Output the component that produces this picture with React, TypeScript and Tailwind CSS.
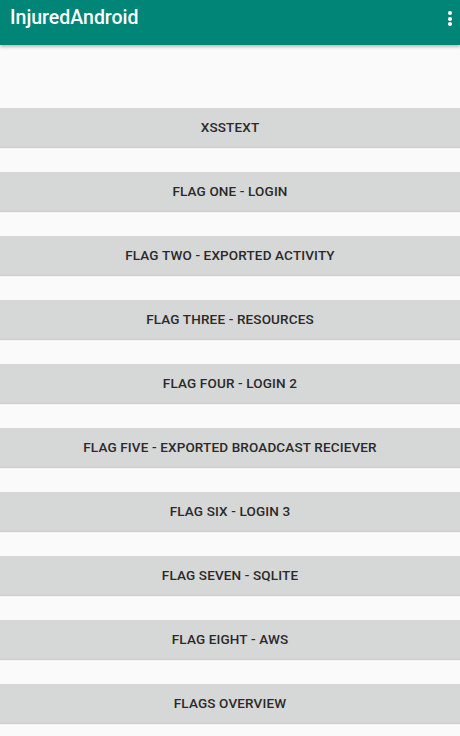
const items = [
  "XSSTEXT",
  "FLAG ONE - LOGIN",
  "FLAG TWO - EXPORTED ACTIVITY",
  "FLAG THREE - RESOURCES",
  "FLAG FOUR - LOGIN 2",
  "FLAG FIVE - EXPORTED BROADCAST RECIEVER",
  "FLAG SIX - LOGIN 3",
  "FLAG SEVEN - SQLITE",
  "FLAG EIGHT - AWS",
  "FLAGS OVERVIEW",
];

export default function App() {
  return (
    <main className="h-[736px] overflow-hidden bg-[#fafafa] font-['Roboto',sans-serif]">
      <header className="relative z-10 flex h-[45px] items-start justify-between bg-[#008577] pl-[10px] pr-[8px] pt-[6px] shadow-[0_2px_3px_rgba(0,0,0,0.25)]">
        <h1 className="text-[19.5px] font-medium leading-[24px] text-white">InjuredAndroid</h1>
        <div className="flex flex-col gap-[1.5px] pt-[5px]">
          <span className="h-[4px] w-[4px] rounded-full bg-white" />
          <span className="h-[4px] w-[4px] rounded-full bg-white" />
          <span className="h-[4px] w-[4px] rounded-full bg-white" />
        </div>
      </header>
      <div className="flex flex-col gap-[25px] pt-[63px]">
        {items.map((label) => (
          <button
            key={label}
            className="h-[39px] w-full bg-[#d6d7d7] text-[13.5px] font-medium tracking-[0.15px] text-[#2a2a2a] shadow-[0_1px_1px_rgba(0,0,0,0.18)]"
          >
            {label}
          </button>
        ))}
      </div>
    </main>
  );
}
